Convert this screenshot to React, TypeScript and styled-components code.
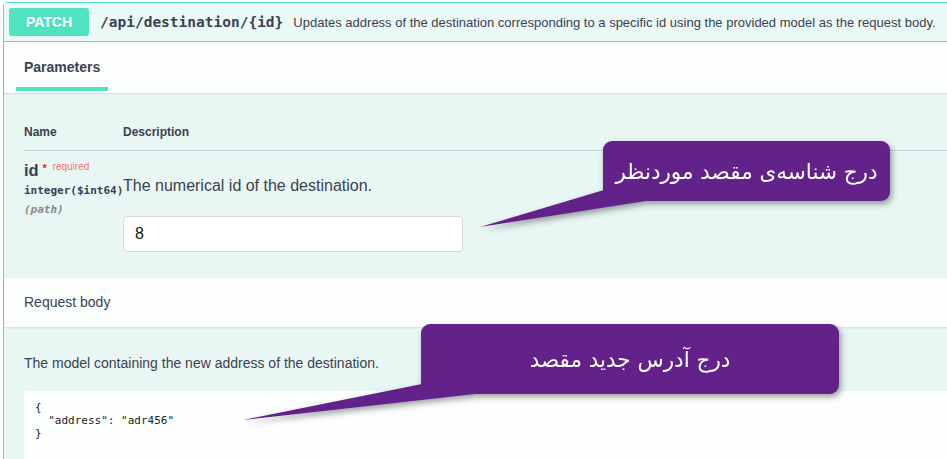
import React from "react";
import styled, { createGlobalStyle } from "styled-components";

const GlobalStyle = createGlobalStyle`
  html, body { margin: 0; padding: 0; background: #ffffff; }
  body {
    font-family: "Liberation Sans", Arial, sans-serif;
    color: #3b4151;
    overflow: hidden;
  }
`;

const Page = styled.div`
  position: relative;
  width: 947px;
  height: 459px;
  overflow: hidden;
  padding: 2px 0 0 3px;
  box-sizing: border-box;
`;

const Frame = styled.section`
  width: 990px;
  min-height: 480px;
  border: 1px solid #50e3c2;
  border-radius: 4px;
  background: #e9f7f4;
`;

const Summary = styled.header`
  display: flex;
  align-items: center;
  height: 38px;
  padding: 0 5px;
  border-bottom: 1px solid #50e3c2;
  background: #ebf9f6;
`;

const MethodBadge = styled.span`
  display: flex;
  align-items: center;
  justify-content: center;
  width: 80px;
  height: 28px;
  border-radius: 3px;
  background: #50e3c2;
  color: #ffffff;
  font-size: 14px;
  font-weight: 700;
  text-shadow: 0 1px 0 rgba(0, 0, 0, 0.1);
`;

const PathText = styled.span`
  margin-left: 11px;
  font-family: "DejaVu Sans Mono", monospace;
  font-size: 14.5px;
  font-weight: 700;
  color: #3b4151;
`;

const SummaryDesc = styled.span`
  margin-left: 10px;
  font-size: 13px;
  white-space: nowrap;
  color: #3b4151;
`;

const SectionHeader = styled.div<{ $h: number }>`
  display: flex;
  align-items: flex-end;
  height: ${(p) => p.$h}px;
  box-sizing: border-box;
  background: #fcfefe;
  box-shadow: 0 1px 2px rgba(0, 0, 0, 0.1);
  position: relative;
`;

const TabBar = styled(SectionHeader)`
  padding: 0 20px 2px 12px;
`;

const Tab = styled.h4`
  margin: 0;
  padding: 0 8px 11px;
  border-bottom: 4px solid #50e3c2;
  font-size: 14px;
  line-height: 17px;
  font-weight: 700;
  color: #3b4151;
`;

const PlainHeader = styled(SectionHeader)`
  align-items: center;
  padding: 0 20px;
`;

const HeaderTitle = styled.span`
  font-size: 14px;
  line-height: 17px;
  color: #3b4151;
`;

const TableContainer = styled.div`
  padding: 20px 20px 26px;
`;

const Row = styled.div<{ $head?: boolean }>`
  display: flex;
  ${(p) =>
    p.$head
      ? `padding: 12px 0 11px; border-bottom: 1px solid rgba(59,65,81,0.22);`
      : `padding-top: 7px;`}
`;

const NameCol = styled.div`
  width: 99px;
  flex: none;
`;

const DescCol = styled.div`
  flex: 1;
`;

const ColHead = styled.div`
  font-size: 12px;
  line-height: 14px;
  font-weight: 700;
  color: #3b4151;
`;

const ParamName = styled.div`
  font-size: 16.5px;
  line-height: 18px;
  font-weight: 700;
  color: #3b4151;
  white-space: nowrap;
`;

const Star = styled.span`
  color: red;
  font-size: 10px;
  vertical-align: 4px;
  margin-left: 4px;
`;

const Required = styled.span`
  color: rgba(255, 0, 0, 0.6);
  font-size: 10px;
  font-weight: 400;
  vertical-align: 6px;
  margin-left: 6px;
`;

const ParamType = styled.div`
  padding: 5px 0;
  font-family: "DejaVu Sans Mono", monospace;
  font-size: 11px;
  line-height: 14px;
  font-weight: 700;
  color: #3b4151;
  white-space: nowrap;
`;

const ParamIn = styled.div`
  font-family: "DejaVu Sans Mono", monospace;
  font-size: 11px;
  line-height: 14px;
  font-style: italic;
  font-weight: 700;
  color: #888888;
`;

const DescText = styled.p`
  margin: 17px 0 0;
  font-size: 16px;
  line-height: 22px;
  color: #3b4151;
`;

const TextInput = styled.input`
  display: block;
  margin-top: 19px;
  width: 340px;
  height: 36px;
  box-sizing: border-box;
  padding: 0 11px;
  border: 1px solid #d9d9d9;
  border-radius: 4px;
  background: #ffffff;
  font-family: "Liberation Sans", Arial, sans-serif;
  font-size: 16px;
  color: #111;
  outline: none;
`;

const BodyWrap = styled.div`
  padding: 28px 0 0 20px;
`;

const BodyDesc = styled.p`
  margin: 0 0 19px;
  font-size: 14px;
  line-height: 17px;
  color: #3b4151;
`;

const CodeBlock = styled.pre`
  margin: 0;
  padding: 10px 11px;
  min-height: 80px;
  border-radius: 4px;
  background: #fdfefe;
  font-family: "DejaVu Sans Mono", monospace;
  font-size: 11px;
  line-height: 13px;
  font-weight: 400;
  color: #222222;
`;

const CalloutWrap = styled.div<{ $x: number; $y: number; $w: number; $h: number }>`
  position: absolute;
  left: ${(p) => p.$x}px;
  top: ${(p) => p.$y}px;
  width: ${(p) => p.$w}px;
  height: ${(p) => p.$h}px;
  filter: drop-shadow(2px 3px 3px rgba(0, 0, 0, 0.38));
`;

const Bubble = styled.div`
  position: relative;
  display: flex;
  align-items: center;
  justify-content: center;
  width: 100%;
  height: 100%;
  border-radius: 9px;
  background: #622289;
  color: #ffffff;
  font-family: "DejaVu Sans", "Liberation Sans", sans-serif;
  font-size: 21.5px;
  direction: rtl;
  white-space: nowrap;
`;

const Tail = styled.svg`
  position: absolute;
  overflow: visible;
`;

type CalloutProps = {
  x: number;
  y: number;
  w: number;
  h: number;
  text: string;
  tail: [number, number][];
};

function Callout({ x, y, w, h, text, tail }: CalloutProps) {
  const pts = tail.map(([px, py]) => `${px - x},${py - y}`).join(" ");
  return (
    <CalloutWrap $x={x} $y={y} $w={w} $h={h}>
      <Tail width="1" height="1" style={{ left: 0, top: 0 }}>
        <polygon points={pts} fill="#622289" />
      </Tail>
      <Bubble>{text}</Bubble>
    </CalloutWrap>
  );
}

export default function App() {
  return (
    <>
      <GlobalStyle />
      <Page>
        <Frame>
          <Summary>
            <MethodBadge>PATCH</MethodBadge>
            <PathText>/api/destination/&#123;id&#125;</PathText>
            <SummaryDesc>
              Updates address of the destination corresponding to a specific id using the provided
              model as the request body.
            </SummaryDesc>
          </Summary>

          <TabBar $h={51}>
            <Tab>Parameters</Tab>
          </TabBar>

          <TableContainer>
            <Row $head>
              <NameCol>
                <ColHead>Name</ColHead>
              </NameCol>
              <DescCol>
                <ColHead>Description</ColHead>
              </DescCol>
            </Row>
            <Row>
              <NameCol>
                <ParamName>
                  id<Star>*</Star>
                  <Required>required</Required>
                </ParamName>
                <ParamType>integer($int64)</ParamType>
                <ParamIn>(path)</ParamIn>
              </NameCol>
              <DescCol>
                <DescText>The numerical id of the destination.</DescText>
                <TextInput defaultValue="8" />
              </DescCol>
            </Row>
          </TableContainer>

          <PlainHeader $h={49}>
            <HeaderTitle>Request body</HeaderTitle>
          </PlainHeader>

          <BodyWrap>
            <BodyDesc>The model containing the new address of the destination.</BodyDesc>
            <CodeBlock>{`{\n  "address": "adr456"\n}`}</CodeBlock>
          </BodyWrap>
        </Frame>

        <Callout
          x={603}
          y={141}
          w={287}
          h={60}
          text="درج شناسه‌ی مقصد موردنظر"
          tail={[
            [480, 227],
            [604, 190],
            [660, 190],
            [652, 200],
          ]}
        />
        <Callout
          x={421}
          y={324}
          w={418}
          h={70}
          text="درج آدرس جدید مقصد"
          tail={[
            [243, 420],
            [422, 384],
            [490, 384],
            [484, 393],
          ]}
        />
      </Page>
    </>
  );
}
